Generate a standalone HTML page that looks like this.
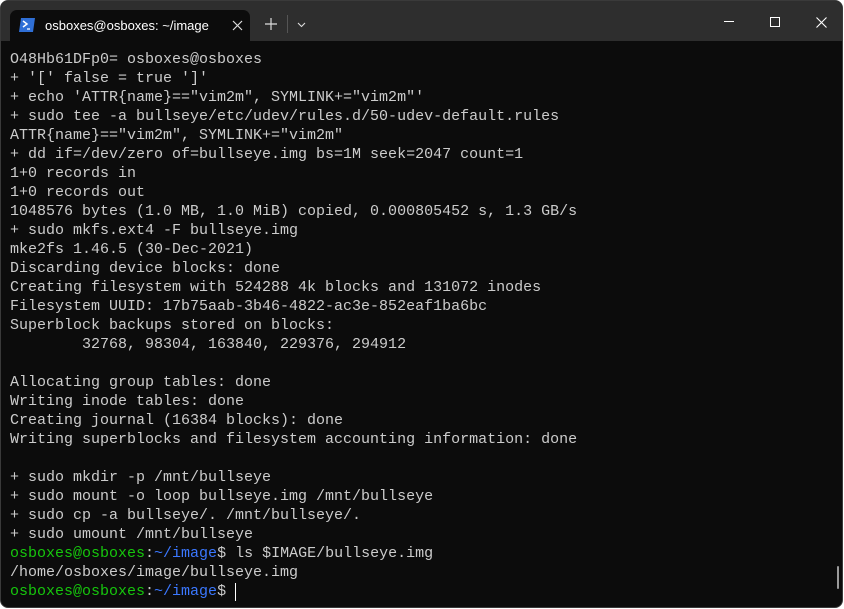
<!DOCTYPE html>
<html><head><style>
html,body{margin:0;padding:0;width:844px;height:609px;overflow:hidden;background:#fff}
.win{position:absolute;left:0;top:0;width:843px;height:608px;background:#0c0c0c;border-radius:8px;overflow:hidden;border:1px solid #3a3a3a;box-sizing:border-box}
.bar{position:absolute;left:0;top:0;right:0;height:40px;background:#2e2e2e}
.tab{position:absolute;left:9px;top:9px;width:240px;height:31px;background:#0c0c0c;border-radius:7px 7px 0 0}
.tab .t{position:absolute;left:35px;top:8px;font:13px "Liberation Sans",sans-serif;color:#fff}
.term{position:absolute;left:9px;top:49px;font:15px/19px "Liberation Mono",monospace;color:#cccccc;white-space:pre;margin:0}
.g{color:#16c60c}.b{color:#3b78ff}
</style></head><body>
<div class="win">
<div class="bar">
<div class="tab">
<svg style="position:absolute;left:9px;top:8px" width="16" height="14"><path d="M2 0H16L14 14H0Z" fill="#2f6fd6"/><path d="M4 3L8 6L4 9" stroke="#fff" stroke-width="1.5" fill="none"/><path d="M8 11H11" stroke="#fff" stroke-width="1.3"/></svg>
<span class="t">osboxes@osboxes: ~/image</span>
<svg style="position:absolute;left:222px;top:10px" width="11" height="11"><path d="M1 1L10 10M10 1L1 10" stroke="#ddd" stroke-width="1.2"/></svg>
</div>
<svg style="position:absolute;left:264px;top:17px" width="12" height="12"><path d="M6 0V12M0 6H12" stroke="#ddd" stroke-width="1.2"/></svg>
<div style="position:absolute;left:286px;top:14px;width:1px;height:18px;background:#555"></div>
<svg style="position:absolute;left:296px;top:21px" width="9" height="6"><path d="M1 1L4.5 4.5L8 1" stroke="#ddd" stroke-width="1.1" fill="none"/></svg>
<div style="position:absolute;left:723px;top:20px;width:10px;height:1px;background:#fff"></div>
<div style="position:absolute;left:769px;top:16px;width:8px;height:8px;border:1px solid #fff"></div>
<svg style="position:absolute;left:815px;top:16px" width="11" height="11"><path d="M0.5 0.5L10.5 10.5M10.5 0.5L0.5 10.5" stroke="#fff" stroke-width="1.1"/></svg>
</div>
<pre class="term">O48Hb61DFp0= osboxes@osboxes
+ '[' false = true ']'
+ echo 'ATTR{name}=="vim2m", SYMLINK+="vim2m"'
+ sudo tee -a bullseye/etc/udev/rules.d/50-udev-default.rules
ATTR{name}=="vim2m", SYMLINK+="vim2m"
+ dd if=/dev/zero of=bullseye.img bs=1M seek=2047 count=1
1+0 records in
1+0 records out
1048576 bytes (1.0 MB, 1.0 MiB) copied, 0.000805452 s, 1.3 GB/s
+ sudo mkfs.ext4 -F bullseye.img
mke2fs 1.46.5 (30-Dec-2021)
Discarding device blocks: done
Creating filesystem with 524288 4k blocks and 131072 inodes
Filesystem UUID: 17b75aab-3b46-4822-ac3e-852eaf1ba6bc
Superblock backups stored on blocks:
        32768, 98304, 163840, 229376, 294912

Allocating group tables: done
Writing inode tables: done
Creating journal (16384 blocks): done
Writing superblocks and filesystem accounting information: done

+ sudo mkdir -p /mnt/bullseye
+ sudo mount -o loop bullseye.img /mnt/bullseye
+ sudo cp -a bullseye/. /mnt/bullseye/.
+ sudo umount /mnt/bullseye
<span class="g">osboxes@osboxes</span>:<span class="b">~/image</span>$ ls $IMAGE/bullseye.img
/home/osboxes/image/bullseye.img
<span class="g">osboxes@osboxes</span>:<span class="b">~/image</span>$ </pre>
<div style="position:absolute;left:234px;top:582px;width:1px;height:18px;background:#fff"></div>
<div style="position:absolute;left:836px;top:565px;width:2px;height:23px;background:#9a9a9a;border-radius:1px"></div>
</div>
</body></html>
